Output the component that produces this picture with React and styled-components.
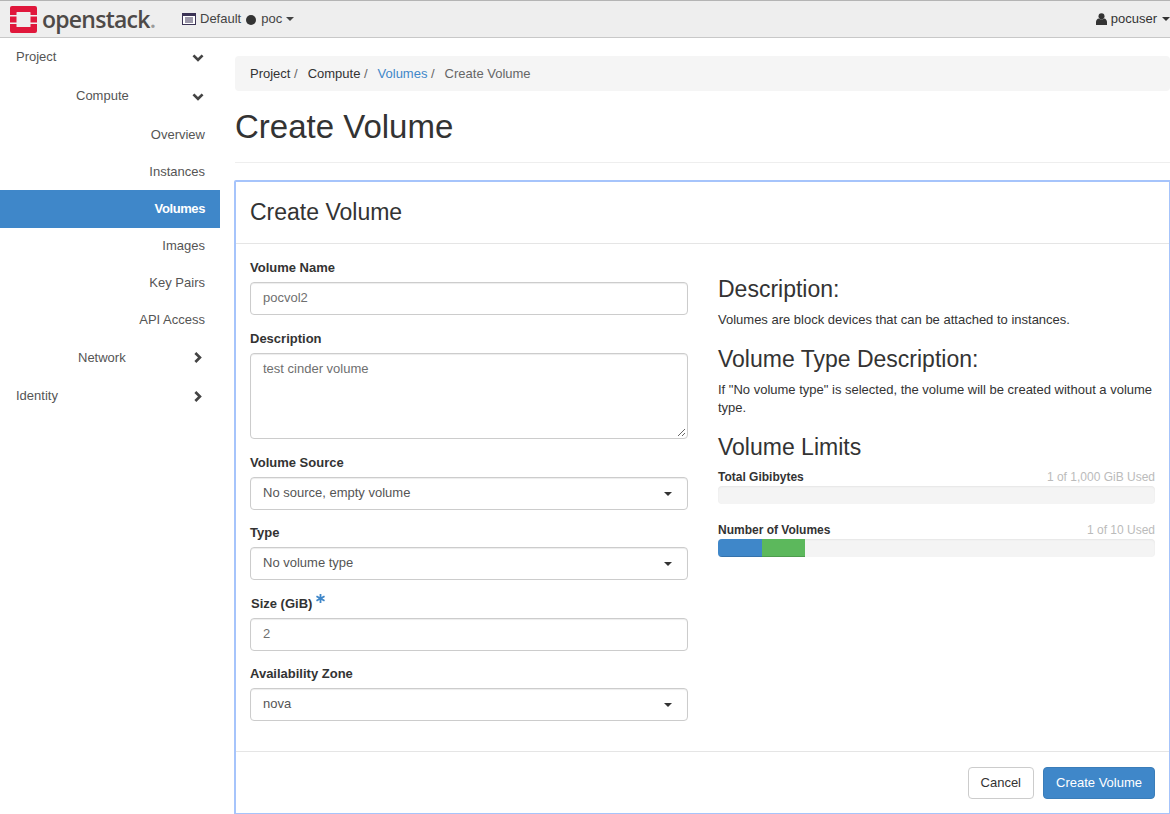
import React from 'react';
import styled, { createGlobalStyle } from 'styled-components';

const Global = createGlobalStyle`
  html, body { margin: 0; padding: 0; background: #fff; }
  body { font-family: "Liberation Sans", Arial, sans-serif; font-size: 13px; line-height: 18px; color: #333; height: 814px; overflow: hidden; }
  * { box-sizing: border-box; }
`;

const Navbar = styled.header`
  height: 38px; background: #eeeeee; border-top: 1px solid #b4b4b4; border-bottom: 1px solid #c8c8c8;
  display: flex; align-items: center; color: #444;
`;
const Logo = styled.div`
  display: flex; align-items: center; margin-left: 10px; width: 172px;
`;
const LogoText = styled.span`
  font-family: "Open Sans", "Liberation Sans", sans-serif; font-size: 23px; font-weight: 600; color: #4e4a48; letter-spacing: -0.75px; margin-left: 5px; line-height: 30px;
`;
const LogoDot = styled.span`color: #9a9a9a;`;
const Scope = styled.div`display: flex; align-items: center; gap: 4px; flex: 1; color: #444;`;
const Caret = styled.span`
  display: inline-block; width: 0; height: 0; border-left: 4px solid transparent; border-right: 4px solid transparent; border-top: 4px solid currentColor; margin-left: ${p => p.$ml || 0}px;
`;
const Dot = styled.span`width: 10px; height: 10px; border-radius: 50%; background: #333; display: inline-block; margin: 1px 1px 0;`;
const User = styled.div`display: flex; align-items: center; gap: 4px; color: #333;`;

const Main = styled.div`display: flex; align-items: flex-start;`;
const Side = styled.nav`width: 220px; flex: none;`;
const NavRow = styled.div`
  height: ${p => p.$h || 38}px; display: flex; align-items: center; color: ${p => p.$active ? '#fff' : '#555'};
  background: ${p => p.$active ? '#3f87c9' : 'transparent'}; font-weight: ${p => p.$active ? 700 : 400};
  letter-spacing: ${p => p.$active ? -0.4 : 0}px; font-size: 13px;
  padding-left: ${p => p.$pl || 0}px; padding-right: ${p => p.$pr || 0}px;
  justify-content: ${p => p.$right ? 'flex-end' : 'flex-start'};
`;
const NavLabel = styled.span`flex: ${p => p.$grow ? 1 : 'none'};`;
const Chev = styled.svg`width: 13px; height: 13px; flex: none; fill: #444;`;

const Content = styled.main`flex: 1; min-width: 0; padding: 18px 0 0 15px;`;
const Crumbs = styled.div`
  height: 35px; background: #f5f5f5; border-radius: 4px; display: flex; align-items: center; padding-left: 15px; color: #777;
`;
const Crumb = styled.span`color: ${p => p.$link ? '#3f87c9' : p.$cur ? '#666' : '#333'};`;
const Sep = styled.span`color: #666; padding: 0 6.33px 0 0;`;
const PageHead = styled.div`height: 72px; border-bottom: 1px solid #eeeeee; display: flex; align-items: center; margin-bottom: 17px;`;
const H1 = styled.h1`margin: 0; font-size: 33px; font-weight: 400; line-height: 40px; color: #333;`;

const Modal = styled.section`
  height: 634px; margin-left: -1px; border: 2px solid #a6c4fb; border-right: 1px solid #a6c4fb; border-bottom: 1px solid #a6c4fb; border-radius: 2px 0 0 0; display: flex; flex-direction: column; background: #fff;
`;
const ModalHead = styled.div`height: 62px; border-bottom: 1px solid #e5e5e5; display: flex; align-items: center; padding: 0 14px 2px; flex: none;`;
const H3 = styled.h3`margin: 0; font-size: 23px; font-weight: 400; line-height: 26px; color: #333;`;
const ModalBody = styled.div`flex: 1; display: flex; padding: 0 14px; gap: 30px;`;
const FormCol = styled.div`width: 438px; flex: none; padding-top: 13px;`;
const InfoCol = styled.div`flex: 1; padding-top: 32px;`;
const Field = styled.div`margin-bottom: ${p => p.$mb ?? 14}px;`;
const Label = styled.label`display: flex; align-items: flex-start; gap: 4px; font-weight: 700; font-size: 13px; line-height: 20px; color: #333; padding-top: 1px; margin-bottom: 4px; padding-left: ${p => p.$pl || 0}px;`;
const Req = styled.svg`width: 9px; height: 9px; fill: #3f87c9; margin-top: 0;`;
const Control = styled.div`
  height: ${p => p.$h || 33}px; border: 1px solid #ccc; border-radius: 4px; background: #fff; color: ${p => p.$dark ? '#555' : '#6f6f6f'};
  padding: ${p => p.$area ? '6px 12px' : '0 12px 2px'}; display: flex; align-items: ${p => p.$area ? 'flex-start' : 'center'}; justify-content: space-between; position: relative;
  box-shadow: inset 0 1px 1px rgba(0,0,0,.075); font-size: 13px;
`;
const Resize = styled.svg`position: absolute; right: 1px; bottom: 1px; width: 10px; height: 10px; stroke: #666; stroke-width: 1; fill: none;`;
const Caret2 = styled(Caret)`color: #333; margin-right: 3px; margin-top: 2px;`;

const H2 = styled.h3`margin: ${p => p.$mt || 0}px 0 ${p => p.$mb ?? 9}px; font-size: 23px; font-weight: 400; line-height: 26px; color: #333;`;
const Para = styled.p`margin: 0; font-size: 13px; line-height: 18px; color: #333;`;
const QuotaHead = styled.div`display: flex; justify-content: space-between; font-size: 12px; line-height: 17px;`;
const QuotaName = styled.span`font-weight: 700; color: #333;`;
const QuotaUsed = styled.span`color: #bbb;`;
const Bar = styled.div`height: 18px; background: #f4f4f4; border-radius: 4px; overflow: hidden; display: flex; box-shadow: inset 0 1px 2px rgba(0,0,0,.06); margin-bottom: ${p => p.$mb || 0}px;`;
const Seg = styled.div`height: 100%; background: ${p => p.$c}; box-shadow: inset 0 -1px 0 rgba(0,0,0,.15);`;

const ModalFoot = styled.div`height: 62px; border-top: 1px solid #e5e5e5; display: flex; align-items: flex-start; justify-content: flex-end; padding: 15px 14px 0; gap: 9px; flex: none;`;
const Btn = styled.button`
  height: 32px; border-radius: 4px; font: 13px "Liberation Sans", sans-serif; padding: 0 12px 2px;
  border: 1px solid ${p => p.$primary ? '#3a7db9' : '#ccc'}; background: ${p => p.$primary ? '#3f87c9' : '#fff'}; color: ${p => p.$primary ? '#fff' : '#333'};
`;

const Down = () => <Chev viewBox="0 0 13 13"><path d="M1 3.8 L2.9 1.9 L6.5 5.5 L10.1 1.9 L12 3.8 L6.5 9.3 Z" transform="translate(-0.5 1.5)" /></Chev>;
const Right = () => <Chev viewBox="0 0 13 13"><path d="M3.8 1 L1.9 2.9 L5.5 6.5 L1.9 10.1 L3.8 12 L9.3 6.5 Z" transform="translate(0.5 0)" /></Chev>;

const App = () => (
  <>
    <Global />
    <Navbar>
      <Logo>
        <svg width="27" height="27" viewBox="0 0 27 27">
          <path fill="#e0173b" fillRule="evenodd" d="M2 0H25a2 2 0 0 1 2 2V9H20.5V6.5a.5.5 0 0 0-.5-.5H7a.5.5 0 0 0-.5.5V9H0V2a2 2 0 0 1 2-2Z M0 10.5H6.5V16.5H0Z M20.5 10.5H27V16.5H20.5Z M0 18H6.5V20.5a.5.5 0 0 0 .5.5H20a.5.5 0 0 0 .5-.5V18H27V25a2 2 0 0 1-2 2H2a2 2 0 0 1-2-2Z" />
        </svg>
        <LogoText>openstack<LogoDot>.</LogoDot></LogoText>
      </Logo>
      <Scope>
        <svg width="14" height="12" viewBox="0 0 14 12"><rect x="0.5" y="0.5" width="13" height="11" fill="#fff" stroke="#3b3355" /><rect x="0.5" y="0.5" width="13" height="2.5" fill="#3b3355" /><path d="M3 5H11M3 7H11M3 9H11" stroke="#3b3355" /></svg>
        <span>Default</span>
        <Dot />
        <span>poc</span>
        <Caret $ml={0} />
      </Scope>
      <User>
        <svg width="11" height="12" viewBox="0 0 11 12" fill="#333"><circle cx="5.5" cy="3.2" r="3" /><path d="M0 12V9c0-2 1.3-3.4 2.8-3.6 1.5 1.2 3.9 1.2 5.4 0C9.7 5.6 11 7 11 9v3Z" /></svg>
        <span>pocuser</span>
        <Caret $ml={1} />
      </User>
    </Navbar>
    <Main>
      <Side>
        <NavRow $h={38} $pl={16} $pr={15}><NavLabel $grow>Project</NavLabel><Down /></NavRow>
        <NavRow $h={40} $pl={76} $pr={15}><NavLabel $grow>Compute</NavLabel><Down /></NavRow>
        <NavRow $h={38} $right $pr={15}>Overview</NavRow>
        <NavRow $h={36} $right $pr={15}>Instances</NavRow>
        <NavRow $h={38} $right $pr={15} $active>Volumes</NavRow>
        <NavRow $h={36} $right $pr={15}>Images</NavRow>
        <NavRow $h={38} $right $pr={15}>Key Pairs</NavRow>
        <NavRow $h={36} $right $pr={15}>API Access</NavRow>
        <NavRow $h={39} $pl={78} $pr={15}><NavLabel $grow>Network</NavLabel><Right /></NavRow>
        <NavRow $h={38} $pl={16} $pr={15}><NavLabel $grow>Identity</NavLabel><Right /></NavRow>
      </Side>
      <Content>
        <Crumbs>
          <Crumb>Project</Crumb><Sep>&nbsp;/&nbsp;</Sep>
          <Crumb>Compute</Crumb><Sep>&nbsp;/&nbsp;</Sep>
          <Crumb $link>Volumes</Crumb><Sep>&nbsp;/&nbsp;</Sep>
          <Crumb $cur>Create Volume</Crumb>
        </Crumbs>
        <PageHead><H1>Create Volume</H1></PageHead>
        <Modal>
          <ModalHead><H3>Create Volume</H3></ModalHead>
          <ModalBody>
            <FormCol>
              <Field $mb={13}>
                <Label>Volume Name</Label>
                <Control>pocvol2</Control>
              </Field>
              <Field $mb={13}>
                <Label>Description</Label>
                <Control $h={86} $area>test cinder volume
                  <Resize viewBox="0 0 10 10"><path d="M9 2 2 9M9 6 6 9" /></Resize>
                </Control>
              </Field>
              <Field $mb={12}>
                <Label>Volume Source</Label>
                <Control $dark>No source, empty volume<Caret2 /></Control>
              </Field>
              <Field $mb={13}>
                <Label>Type</Label>
                <Control $dark>No volume type<Caret2 /></Control>
              </Field>
              <Field $mb={12}>
                <Label $pl={1}>Size (GiB)
                  <Req viewBox="0 0 10 10"><path d="M4 0h2v3.3l3-1.7 1 1.7L7 5l3 1.7-1 1.7-3-1.7V10H4V6.7L1 8.4 0 6.7 3 5 0 3.3l1-1.7L4 3.3Z" /></Req>
                </Label>
                <Control>2</Control>
              </Field>
              <Field $mb={0}>
                <Label>Availability Zone</Label>
                <Control $dark>nova<Caret2 /></Control>
              </Field>
            </FormCol>
            <InfoCol>
              <H2>Description:</H2>
              <Para>Volumes are block devices that can be attached to instances.</Para>
              <H2 $mt={17}>Volume Type Description:</H2>
              <Para>If "No volume type" is selected, the volume will be created without a volume type.</Para>
              <H2 $mt={17}>Volume Limits</H2>
              <QuotaHead><QuotaName>Total Gibibytes</QuotaName><QuotaUsed>1 of 1,000 GiB Used</QuotaUsed></QuotaHead>
              <Bar $mb={18} />
              <QuotaHead><QuotaName>Number of Volumes</QuotaName><QuotaUsed>1 of 10 Used</QuotaUsed></QuotaHead>
              <Bar>
                <Seg $c="#3f87c9" style={{ width: '10%' }} />
                <Seg $c="#5cb85c" style={{ width: '10%' }} />
              </Bar>
            </InfoCol>
          </ModalBody>
          <ModalFoot>
            <Btn>Cancel</Btn>
            <Btn $primary>Create Volume</Btn>
          </ModalFoot>
        </Modal>
      </Content>
    </Main>
  </>
);

export default App;
